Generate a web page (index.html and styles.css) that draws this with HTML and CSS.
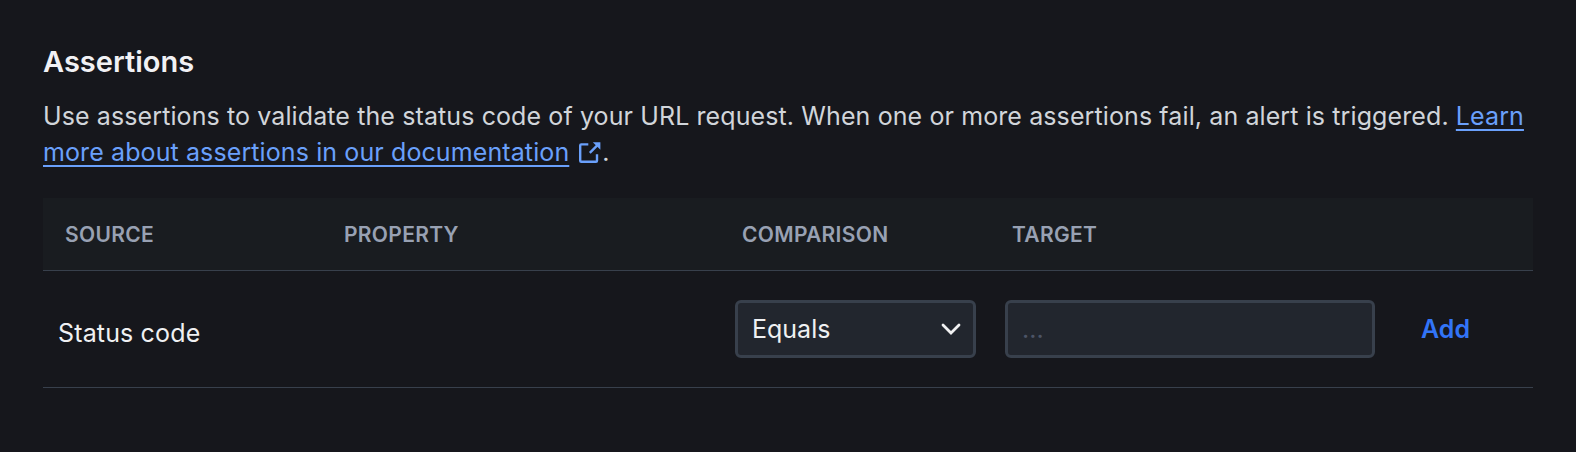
FILE: index.html
```
<!DOCTYPE html>
<html lang="en">
<head>
<meta charset="utf-8">
<title>Assertions</title>
<link rel="stylesheet" href="styles.css">
</head>
<body>
<main class="panel">
  <h2 class="title">Assertions</h2>
  <p class="intro">Use assertions to validate the status code of your URL request. When one or more assertions fail, an alert is triggered. <a class="link" href="#">Learn<br>more about assertions in our documentation</a><svg class="external" viewBox="0 0 22 22" fill="none" stroke="currentColor" stroke-width="2.4" stroke-linejoin="round"><path d="M9.3 2.4H2.2Q1.2 2.4 1.2 3.4V18.7Q1.2 19.7 2.2 19.7H17Q18 19.7 18 18.7V12.3M10.8 10.9L18.5 3.2"/><path d="M13.8 .2H21.4V7.8Z" fill="currentColor" stroke="none"/></svg>.</p>
  <div class="table">
    <div class="row head"><span>SOURCE</span><span>PROPERTY</span><span>COMPARISON</span><span>TARGET</span></div>
    <div class="row body">
      <span class="source">Status code</span>
      <span></span>
      <div class="field select"><span>Equals</span><svg class="chevron" viewBox="0 0 20 12" fill="none" stroke="currentColor" stroke-width="2.8" stroke-linecap="round"><path d="M2 2L10 10L18 2"/></svg></div>
      <div class="field target">...</div>
      <span class="add">Add</span>
    </div>
  </div>
</main>
</body>
</html>
```
FILE: styles.css
```
* { box-sizing: border-box; }
body { margin: 0; background: #16171c; color: #d1d5da; font-family: Inter, sans-serif; font-size: 25px; }
.panel { padding: 44px 43px 0; }
.title { margin: 0; font-size: 29px; line-height: 36px; font-weight: 600; color: #f1f1f4; }
.intro { margin: 18px 0 0; line-height: 36px; white-space: nowrap; letter-spacing: 0.105px; }
.link { color: #6aa0fb; text-decoration: underline; text-decoration-thickness: 2px; text-underline-offset: 4px; }
.external { width: 22px; height: 22px; margin: 0 1px 0 10px; vertical-align: -3px; color: #6aa0fb; }
.table { margin-top: 28px; }
.row { display: grid; grid-template-columns: 279px 398px 270px 400px auto; }
.head { height: 73px; align-items: center; padding-left: 22px; background: #191c20; border-bottom: 1px solid #38404c; color: #98a1b3; font-size: 21px; font-weight: 600; letter-spacing: 0.3px; }
.body { height: 117px; padding-left: 15px; align-items: center; border-bottom: 1px solid #38404c; color: #eff0f2; }
.source { padding-top: 8px; letter-spacing: 0.15px; }
.field { height: 58px; border: 3px solid #38404c; border-radius: 6px; background: #22262e; display: flex; align-items: center; }
.select { width: 241px; padding: 0 12px 0 14px; justify-content: space-between; }
.chevron { width: 20px; height: 12px; color: #f1f1f2; }
.target { width: 370px; padding-left: 14px; color: #4c5466; }
.add { padding-left: 16px; color: #3274f6; font-weight: 600; }
```
